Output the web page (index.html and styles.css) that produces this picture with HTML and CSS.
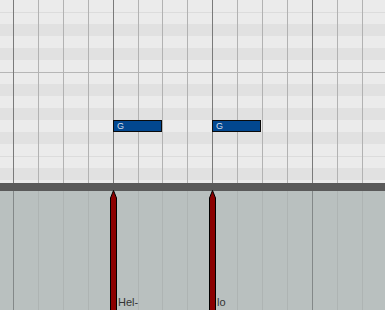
FILE: index.html
```html
<!DOCTYPE html>
<html lang="en">
  <head>
    <meta charset="UTF-8" />
    <title>Piano Roll</title>
    <link rel="stylesheet" href="styles.css">
  </head>
  <body>
    <div class="editor">
      <!-- note grid -->
      <div class="roll">
        <div class="cols">
          <div class="col"></div><div class="col"></div><div class="col"></div><div class="col"></div>
          <div class="col"></div><div class="col"></div><div class="col"></div><div class="col"></div>
          <div class="col"></div><div class="col"></div><div class="col"></div><div class="col"></div>
          <div class="col"></div><div class="col"></div><div class="col"></div><div class="col"></div>
        </div>
        <div class="note" style="left: 113px; top: 120px"><span>G</span></div>
        <div class="note" style="left: 212px; top: 120px"><span>G</span></div>
      </div>
      <div class="divider"></div>
      <!-- lyric / phoneme lane -->
      <div class="lane">
        <div class="cols">
          <div class="col"></div><div class="col"></div><div class="col"></div><div class="col"></div>
          <div class="col"></div><div class="col"></div><div class="col"></div><div class="col"></div>
          <div class="col"></div><div class="col"></div><div class="col"></div><div class="col"></div>
          <div class="col"></div><div class="col"></div><div class="col"></div><div class="col"></div>
        </div>
        <div class="marker" style="left: 110px">
          <svg width="7" height="121" viewBox="0 0 7 121">
            <path d="M0.5 8 L3.5 0.5 L6.5 8 V121 H0.5 Z" fill="#8b0000" stroke="#000" stroke-width="1" />
          </svg>
          <span class="lyric">Hel-</span>
        </div>
        <div class="marker" style="left: 209px">
          <svg width="7" height="121" viewBox="0 0 7 121">
            <path d="M0.5 8 L3.5 0.5 L6.5 8 V121 H0.5 Z" fill="#8b0000" stroke="#000" stroke-width="1" />
          </svg>
          <span class="lyric">lo</span>
        </div>
      </div>
    </div>
  </body>
</html>
```

FILE: styles.css
```css
body {
  margin: 0;
  width: 385px;
  height: 310px;
  overflow: hidden;
  font-family: 'Liberation Sans', Arial, sans-serif;
}
.editor {
  display: flex;
  flex-direction: column;
  width: 385px;
  height: 310px;
  position: relative;
  overflow: hidden;
}
/* grid columns */
.cols {
  display: flex;
  height: 100%;
  padding-left: 13px;
}
.col {
  flex: 0 0 24.92px;
  box-sizing: border-box;
  border-left: 1px solid #b2b2b2;
}
.col:nth-child(4n + 1) {
  border-left-color: #7a7a7a;
}
/* piano roll */
.roll {
  position: relative;
  height: 183px;
  background: repeating-linear-gradient(
    to bottom,
    #ebebeb 0 12px,
    #dcdcdc 12px 13px,
    #ebebeb 13px 24px,
    #e1e1e1 24px 36px,
    #ebebeb 36px 48px,
    #e1e1e1 48px 60px,
    #ebebeb 60px 72px,
    #b6b6b6 72px 73px,
    #ebebeb 73px 84px,
    #e1e1e1 84px 96px,
    #ebebeb 96px 108px,
    #e1e1e1 108px 120px,
    #ebebeb 120px 132px,
    #e1e1e1 132px 144px
  );
}
.note {
  position: absolute;
  width: 49px;
  height: 12px;
  box-sizing: border-box;
  border: 1px solid #0a0a0a;
  background-color: #02478f;
  color: #d6dfea;
  font-size: 9px;
  line-height: 10px;
  padding-left: 3px;
}
.divider {
  height: 8px;
  background-color: #5a5a5a;
}
/* lyric lane */
.lane {
  position: relative;
  flex: 1;
  background-color: #b9c0bf;
}
.lane .col {
  border-left-color: #aeb4b3;
}
.lane .col:nth-child(4n + 1) {
  border-left-color: #838888;
}
.marker {
  position: absolute;
  top: -1px;
  bottom: 0;
  width: 7px;
}
.marker svg {
  display: block;
}
.lyric {
  position: absolute;
  left: 8px;
  bottom: 2px;
  font-size: 11px;
  line-height: 12px;
  color: #333;
  white-space: nowrap;
}
```
